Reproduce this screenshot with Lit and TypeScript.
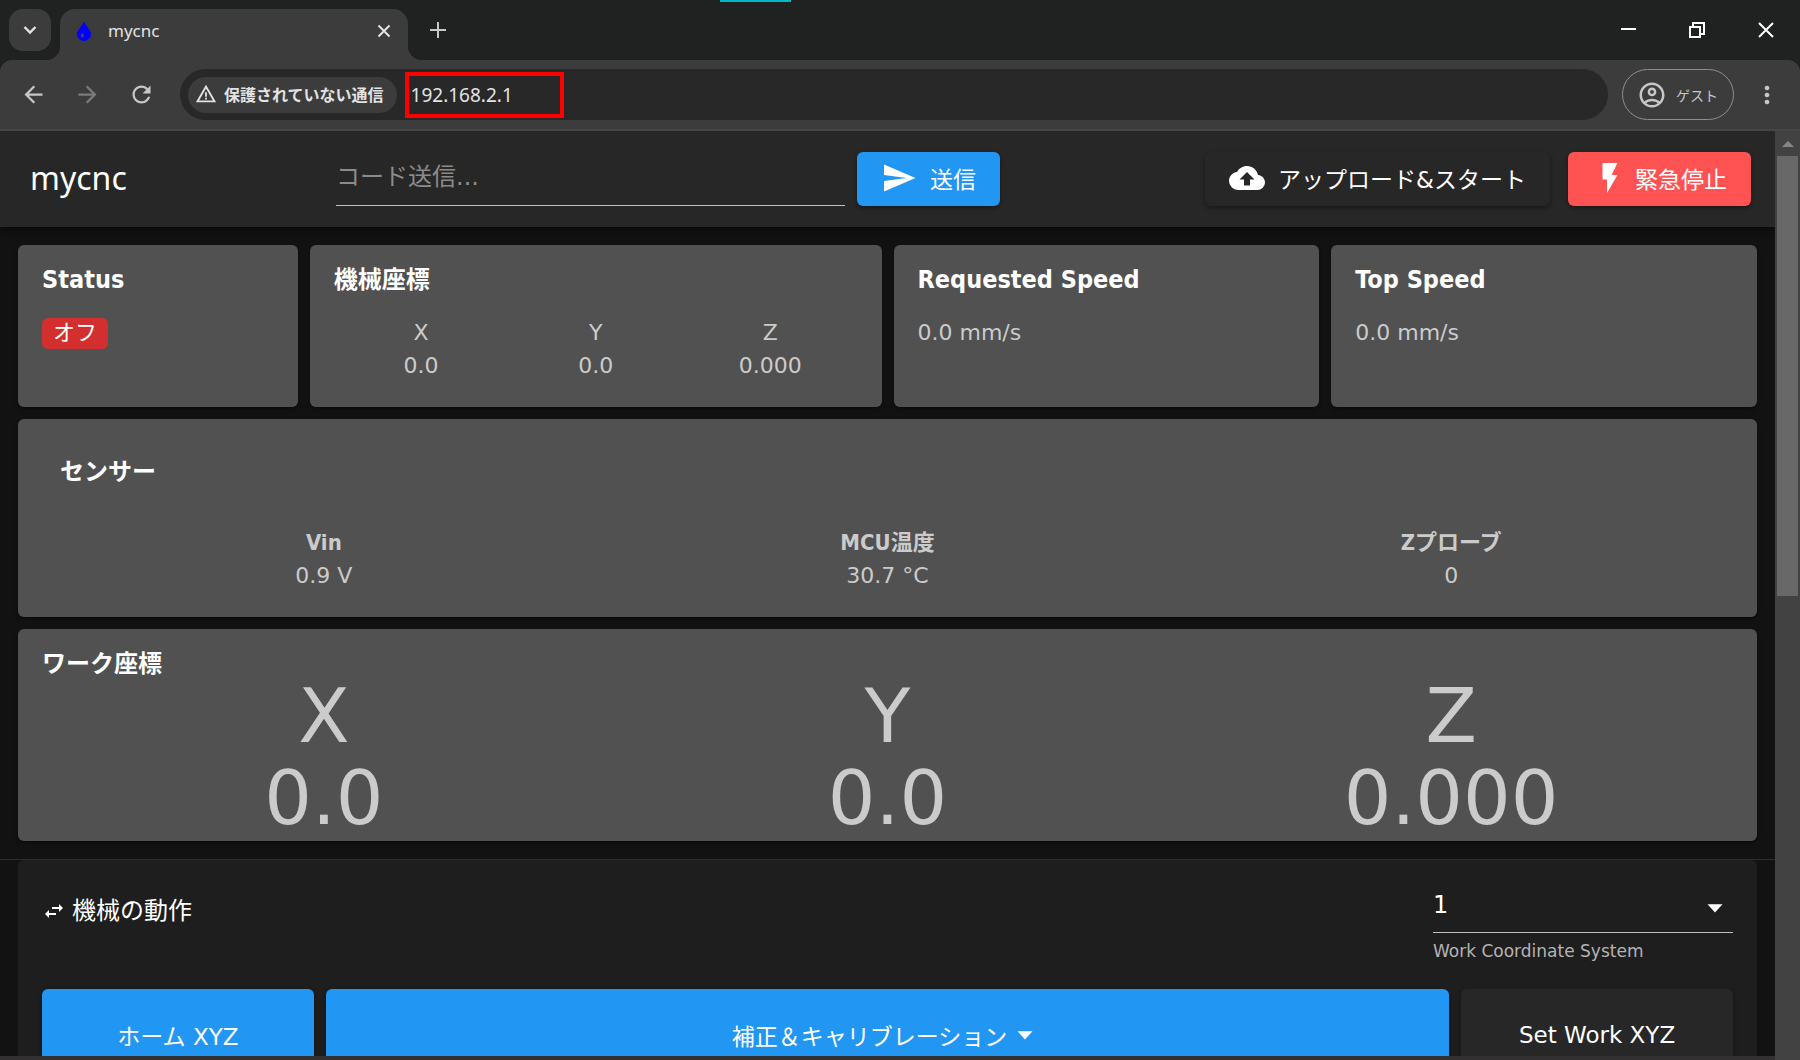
import { LitElement, html, css, svg } from "lit";
import { customElement, property } from "lit/decorators.js";

const icons: Record<string, string> = {
  send: "M2,21L23,12L2,3V10L17,12L2,14V21Z",
  upload:
    "M14,13V17H10V13H7L12,8L17,13M19.35,10.04C18.67,6.59 15.64,4 12,4C9.11,4 6.6,5.64 5.35,8.04C2.34,8.36 0,10.91 0,14A6,6 0 0,0 6,20H19A5,5 0 0,0 24,15C24,12.36 21.95,10.22 19.35,10.04Z",
  flash: "M7,2V13H10V22L17,10H13L17,2H7Z",
  swap: "M21,9L17,5V8H10V10H17V13M7,11L3,15L7,19V16H14V14H7V11Z",
  menuDown: "M7,9.5L12,15L17,9.5H7Z",
  back: "M20 11H7.83l5.59-5.59L12 4l-8 8 8 8 1.41-1.41L7.83 13H20v-2z",
  forward: "M12 4l-1.41 1.41L16.17 11H4v2h12.17l-5.58 5.59L12 20l8-8z",
  reload:
    "M17.65 6.35C16.2 4.9 14.21 4 12 4c-4.42 0-7.99 3.58-7.99 8s3.57 8 7.99 8c3.73 0 6.84-2.55 7.73-6h-2.08c-.82 2.33-3.04 4-5.65 4-3.31 0-6-2.69-6-6s2.69-6 6-6c1.66 0 3.14.69 4.22 1.78L13 11h7V4l-2.35 2.35z",
  warning: "M1 21h22L12 2 1 21zm3.47-2L12 5.99 19.53 19H4.47zM11 16h2v2h-2zM11 10h2v5h-2z",
  account:
    "M12 2C6.48 2 2 6.48 2 12s4.48 10 10 10 10-4.48 10-10S17.52 2 12 2zM7.35 18.5C8.66 17.56 10.26 17 12 17s3.34.56 4.65 1.5C15.34 19.44 13.74 20 12 20s-3.34-.56-4.65-1.5zm10.79-1.38C16.45 15.8 14.32 15 12 15s-4.45.8-6.14 2.12C4.7 15.73 4 13.95 4 12c0-4.42 3.58-8 8-8s8 3.58 8 8c0 1.95-.7 3.73-1.86 5.12zM12 6c-1.93 0-3.5 1.57-3.5 3.5S10.07 13 12 13s3.5-1.57 3.5-3.5S13.93 6 12 6zm0 5c-.83 0-1.5-.67-1.5-1.5S11.17 8 12 8s1.5.67 1.5 1.5S12.83 11 12 11z",
  kebab: "M12 4a2 2 0 1 0 .01 0zM12 10a2 2 0 1 0 .01 0zM12 16a2 2 0 1 0 .01 0z",
};

const icon = (name: string, size: number) => html`<svg
  width=${size}
  height=${size}
  viewBox="0 0 24 24"
  fill="currentColor"
  aria-hidden="true"
>
  ${svg`<path d=${icons[name]}></path>`}
</svg>`;

const reset = css`
  * {
    box-sizing: border-box;
    margin: 0;
  }
  button,
  input,
  select {
    font: inherit;
    color: inherit;
    border: 0;
    background: none;
    padding: 0;
    outline: none;
  }
  svg {
    display: block;
    flex: none;
  }
`;

@customElement("browser-bar")
export class BrowserBar extends LitElement {
  static styles = [
    reset,
    css`
      :host {
        display: block;
        color: #e3e3e3;
        font-family: "Noto Sans", "Noto Sans CJK JP", sans-serif;
        background: #202221;
      }
      .tabs {
        position: relative;
        display: flex;
        height: 60px;
        padding-left: 9px;
      }
      .search {
        display: grid;
        place-items: center;
        width: 42px;
        height: 42px;
        margin-top: 9px;
        border-radius: 14px;
        background: #3c3c3c;
      }
      .tab {
        position: relative;
        display: flex;
        align-items: center;
        width: 348px;
        margin: 9px 0 0 9px;
        padding: 0 17px 8px 16px;
        border-radius: 15px 15px 0 0;
        background: #3c3c3c;
      }
      .tab::before,
      .tab::after {
        content: "";
        position: absolute;
        bottom: 0;
        width: 15px;
        height: 15px;
      }
      .tab::before {
        right: 100%;
        background: radial-gradient(circle at 0 0, transparent 15px, #3c3c3c 16px);
      }
      .tab::after {
        left: 100%;
        background: radial-gradient(circle at 100% 0, transparent 15px, #3c3c3c 16px);
      }
      .name {
        flex: 1;
        margin: 0 16px;
        font-size: 17px;
        line-height: 24px;
      }
      .add {
        padding: 0 22px;
      }
      .accent {
        position: absolute;
        top: 0;
        left: 40%;
        width: 71px;
        height: 2px;
        background: #00b8c4;
      }
      .window {
        display: flex;
        margin-left: auto;
        color: #fff;
      }
      .window button {
        display: grid;
        place-items: center;
        width: 69px;
      }
      .toolbar {
        display: flex;
        align-items: center;
        height: 71px;
        padding: 0 6px;
        border-bottom: 2px solid #464646;
        border-radius: 12px 12px 0 0;
        background: #3c3c3c;
        color: #c7c7c7;
      }
      .nav {
        display: grid;
        place-items: center;
        width: 54px;
        height: 54px;
      }
      .nav:disabled {
        color: #7b7b7b;
      }
      .omnibox {
        display: flex;
        flex: 1;
        align-items: center;
        height: 51px;
        margin: 0 14px 0 12px;
        padding-left: 8px;
        border-radius: 26px;
        background: #282828;
        color: #e3e3e3;
      }
      .chip {
        display: flex;
        align-items: center;
        gap: 7px;
        height: 36px;
        padding: 0 13px 2px 7px;
        border-radius: 18px;
        background: #3c3c3c;
        font-size: 16px;
        font-weight: 700;
      }
      .marked {
        display: flex;
        width: 159px;
        height: 46px;
        margin-left: 8px;
        padding-left: 2px;
        border: 4px solid #f00;
      }
      .marked input {
        width: 100%;
        font-size: 19px;
      }
      .guest {
        display: flex;
        align-items: center;
        gap: 9px;
        height: 51px;
        padding: 0 15px 0 14px;
        border: 1px solid #8f8f8f;
        border-radius: 26px;
        font-size: 14px;
      }
      .more {
        padding: 0 13px 0 19px;
      }
    `,
  ];

  render() {
    return html`
      <div class="tabs">
        <button class="search" aria-label="タブを検索">
          <svg width="14" height="14" viewBox="0 0 14 14" fill="none" stroke="currentColor" stroke-width="2.4">
            <path d="M1.500 4l5.500 5.500 5.500-5.500" />
          </svg>
        </button>
        <div class="tab">
          <svg width="16" height="22" viewBox="0 0 16 22">
            <path d="M8 1C7 6 1 9 1 14.500A7 6.500 0 0 0 15 14.500C15 9 9 6 8 1z" fill="#00f" />
            <ellipse cx="6.300" cy="15.500" rx="1.600" ry="2.200" fill="#3c3c78" />
          </svg>
          <span class="name">mycnc</span>
          <button aria-label="閉じる">
            <svg width="14" height="14" viewBox="0 0 14 14" stroke="currentColor" stroke-width="2">
              <path d="M1.500 1.500l11 11M12.500 1.500l-11 11" />
            </svg>
          </button>
        </div>
        <button class="add" aria-label="新しいタブ">
          <svg width="16" height="16" viewBox="0 0 16 16" stroke="#c7c7c7" stroke-width="2">
            <path d="M8 0v16M0 8h16" />
          </svg>
        </button>
        <span class="accent"></span>
        <div class="window">
          <button aria-label="最小化">
            <svg width="16" height="16" viewBox="0 0 16 16" stroke="currentColor" stroke-width="2">
              <path d="M1 7h15" />
            </svg>
          </button>
          <button aria-label="元に戻す">
            <svg width="16" height="16" viewBox="0 0 16 16" fill="none" stroke="currentColor" stroke-width="2">
              <path d="M1 5h10v10H1zM4 5V1h11v11h-4" />
            </svg>
          </button>
          <button aria-label="ウィンドウを閉じる">
            <svg width="16" height="16" viewBox="0 0 16 16" stroke="currentColor" stroke-width="2">
              <path d="M1 1l14 14M15 1L1 15" />
            </svg>
          </button>
        </div>
      </div>
      <div class="toolbar">
        <button class="nav" aria-label="戻る">${icon("back", 27)}</button>
        <button class="nav" aria-label="進む" disabled>${icon("forward", 27)}</button>
        <button class="nav" aria-label="再読み込み">${icon("reload", 27)}</button>
        <div class="omnibox">
          <button class="chip">${icon("warning", 22)}保護されていない通信</button>
          <div class="marked"><input type="text" aria-label="アドレス" .value=${"192.168.2.1"} /></div>
        </div>
        <button class="guest">${icon("account", 30)}ゲスト</button>
        <button class="more" aria-label="メニュー">${icon("kebab", 28)}</button>
      </div>
    `;
  }
}

interface Reading {
  label: string;
  value: string;
}

@customElement("reading-row")
export class ReadingRow extends LitElement {
  @property({ attribute: false }) readings: Reading[] = [];
  @property({ reflect: true }) variant = "plain";

  static styles = [
    reset,
    css`
      :host {
        display: block;
      }
      .row {
        display: grid;
        grid-auto-flow: column;
        grid-auto-columns: 1fr;
        text-align: center;
      }
      :host([variant="strong"]) .label {
        font-family: "DejaVu Sans Condensed", "DejaVu Sans", "Noto Sans CJK JP", sans-serif;
        font-weight: 700;
      }
      :host([variant="large"]) {
        font-size: 75px;
        line-height: 76px;
      }
      :host([variant="large"]) .value {
        margin-top: 6px;
      }
    `,
  ];

  render() {
    return html`<dl class="row">
      ${this.readings.map(
        (r) => html`<div>
          <dt class="label">${r.label}</dt>
          <dd class="value">${r.value}</dd>
        </div>`
      )}
    </dl>`;
  }
}

@customElement("app-root")
export class AppRoot extends LitElement {
  static styles = [
    reset,
    css`
      :host {
        display: flex;
        flex-direction: column;
        height: 100vh;
        overflow: hidden;
        background: #121212;
        color: #fff;
        font-family: "DejaVu Sans", "Noto Sans CJK JP", sans-serif;
      }
      .view {
        display: flex;
        flex: 1;
        min-height: 0;
      }
      .page {
        flex: 1;
        min-width: 0;
        overflow: hidden;
        border-bottom: 4px solid #323031;
      }
      .scrollbar {
        display: flex;
        flex-direction: column;
        align-items: center;
        width: 25px;
        background: #424242;
      }
      .up {
        width: 0;
        margin: 10px 0 9px;
        border: 6px solid transparent;
        border-top: 0;
        border-bottom: 6px solid #868686;
      }
      .thumb {
        width: 21px;
        height: 440px;
        background: #686868;
      }
      .header {
        position: relative;
        display: flex;
        align-items: center;
        height: 96px;
        padding: 0 24px 0 30px;
        background: #272727;
        box-shadow: 0 3px 8px rgba(0, 0, 0, 0.5);
      }
      .brand {
        flex: 0 0 306px;
        padding-bottom: 3px;
        font-family: "Noto Sans", sans-serif;
        font-size: 32px;
        font-weight: 400;
        line-height: 42px;
      }
      .code {
        flex: 0 1 509px;
        min-width: 0;
        height: 54px;
        margin-right: 12px;
        padding-bottom: 3px;
        border-bottom: 1px solid #c0c0c0;
        font-size: 24px;
      }
      .code::placeholder {
        color: #8b8b8b;
        opacity: 1;
      }
      .btn {
        display: flex;
        align-items: center;
        justify-content: center;
        gap: 13px;
        height: 54px;
        padding: 0 24px 2px;
        border-radius: 6px;
        background: #272727;
        box-shadow: 0 2px 4px rgba(0, 0, 0, 0.4);
        font-size: 23px;
        white-space: nowrap;
      }
      .primary {
        background: #2196f3;
      }
      .danger {
        gap: 7px;
        margin-left: 18px;
        background: #ff5252;
      }
      .upload {
        margin-left: auto;
      }
      .cards {
        display: grid;
        grid-template-columns: repeat(12, minmax(0, 1fr));
        gap: 12px;
        padding: 18px;
        border-bottom: 1px solid #2f2f2f;
      }
      .card {
        padding: 21px 24px 25px;
        border-radius: 6px;
        background: #515151;
        box-shadow: 0 2px 4px rgba(0, 0, 0, 0.4);
        color: #cbcbcb;
        font-size: 22px;
        line-height: 33px;
      }
      .title {
        margin-bottom: 22px;
        color: #fff;
        font-family: "DejaVu Sans Condensed", "DejaVu Sans", "Noto Sans CJK JP", sans-serif;
        font-size: 25px;
        font-weight: 700;
        line-height: 28px;
      }
      .title:lang(ja) {
        font-size: 24px;
      }
      .two {
        grid-column: span 2;
      }
      .three {
        grid-column: span 3;
      }
      .four {
        grid-column: span 4;
      }
      .eight {
        grid-column: span 8;
      }
      .full {
        grid-column: 1 / -1;
      }
      .sensors {
        padding-top: 39px;
      }
      .sensors .title {
        margin: 0 18px 40px;
      }
      .work {
        padding-bottom: 5px;
      }
      .work .title {
        margin-bottom: 0;
      }
      .badge {
        display: inline-block;
        margin-top: 2px;
        padding: 0 11px 2px;
        border-radius: 6px;
        background: #d32f2f;
        color: #fff;
        line-height: 29px;
        vertical-align: top;
      }
      .motion {
        margin: 0 18px;
        padding: 18px 24px;
        border-radius: 6px 6px 0 0;
        background: #1e1e1e;
      }
      .motion-head {
        display: flex;
        justify-content: space-between;
      }
      .motion-title {
        display: flex;
        align-items: center;
        gap: 6px;
        height: 66px;
        font-size: 24px;
        font-weight: 400;
      }
      .motion-name {
        padding-bottom: 6px;
      }
      .system {
        width: 300px;
      }
      .picker {
        position: relative;
      }
      .picker select {
        width: 100%;
        height: 55px;
        appearance: none;
        border-bottom: 1px solid #c0c0c0;
        font-size: 24px;
      }
      .picker svg {
        position: absolute;
        right: 0;
        top: 12px;
        pointer-events: none;
      }
      .hint {
        display: block;
        padding-top: 6px;
        color: #b4b4b4;
        font-size: 17px;
        line-height: 24px;
      }
      .actions {
        display: grid;
        grid-template-columns: repeat(12, minmax(0, 1fr));
        gap: 12px;
        margin-top: 26px;
      }
      .actions .btn {
        height: 94px;
        gap: 0;
      }
    `,
  ];

  private axes: Reading[] = [
    { label: "X", value: "0.0" },
    { label: "Y", value: "0.0" },
    { label: "Z", value: "0.000" },
  ];

  private sensors: Reading[] = [
    { label: "Vin", value: "0.9 V" },
    { label: "MCU温度", value: "30.7 °C" },
    { label: "Zプローブ", value: "0" },
  ];

  render() {
    return html`
      <browser-bar></browser-bar>
      <div class="view">
        <div class="page">
          <header class="header">
            <h1 class="brand">mycnc</h1>
            <input class="code" type="text" placeholder="コード送信..." aria-label="コード送信" />
            <button class="btn primary">${icon("send", 36)}送信</button>
            <button class="btn upload">${icon("upload", 36)}アップロード&amp;スタート</button>
            <button class="btn danger">${icon("flash", 36)}緊急停止</button>
          </header>
          <main>
            <div class="cards">
              <section class="card two">
                <h2 class="title">Status</h2>
                <span class="badge">オフ</span>
              </section>
              <section class="card four">
                <h2 class="title" lang="ja">機械座標</h2>
                <reading-row .readings=${this.axes}></reading-row>
              </section>
              <section class="card three">
                <h2 class="title">Requested Speed</h2>
                <p>0.0 mm/s</p>
              </section>
              <section class="card three">
                <h2 class="title">Top Speed</h2>
                <p>0.0 mm/s</p>
              </section>
              <section class="card full sensors">
                <h2 class="title" lang="ja">センサー</h2>
                <reading-row variant="strong" .readings=${this.sensors}></reading-row>
              </section>
              <section class="card full work">
                <h2 class="title" lang="ja">ワーク座標</h2>
                <reading-row variant="large" .readings=${this.axes}></reading-row>
              </section>
            </div>
            <section class="motion">
              <div class="motion-head">
                <h2 class="motion-title">
                  ${icon("swap", 24)}<span class="motion-name">機械の動作</span>
                </h2>
                <div class="system">
                  <div class="picker">
                    <select id="system">
                      <option>1</option>
                    </select>
                    ${icon("menuDown", 36)}
                  </div>
                  <label class="hint" for="system">Work Coordinate System</label>
                </div>
              </div>
              <div class="actions">
                <button class="btn primary two">ホーム XYZ</button>
                <button class="btn primary eight">補正＆キャリブレーション${icon("menuDown", 36)}</button>
                <button class="btn two">Set Work XYZ</button>
              </div>
            </section>
          </main>
        </div>
        <div class="scrollbar" aria-hidden="true">
          <span class="up"></span>
          <span class="thumb"></span>
        </div>
      </div>
    `;
  }
}
